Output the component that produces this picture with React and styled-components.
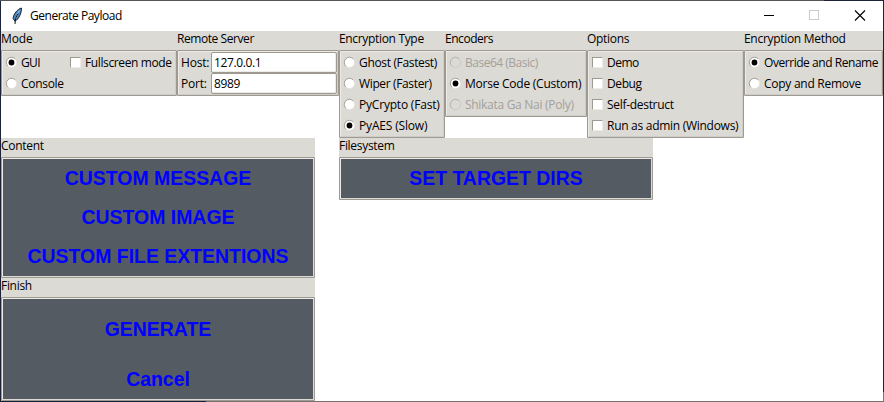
import React from "react";
import styled, { createGlobalStyle } from "styled-components";

const Global = createGlobalStyle`
  * { box-sizing: border-box; }
  body { margin: 0; overflow: hidden; background: #fff; }
`;
const Desktop = styled.div`
  width: 884px; height: 402px; padding: 1px;
  background:
    linear-gradient(90deg, #14203a 206px, #74716f 206px) 0 401px / 884px 1px no-repeat,
    linear-gradient(90deg, #555354 824px, #1a2338 824px) 0 0 / 884px 1px no-repeat,
    linear-gradient(#1a2338 392px, #777 392px) 883px 0 / 1px 402px no-repeat,
    #1a2338;
`;
const Window = styled.main`
  width: 882px; height: 400px; background: #fff; color: #000;
  font: 12px/19px "Open Sans", "Noto Sans", sans-serif;
`;
const TitleBar = styled.header`
  height: 30px; display: flex; align-items: center; padding-left: 10px;
`;
const Title = styled.span`
  margin-left: 7px; flex: 1; letter-spacing: -0.48px; line-height: 28px; height: 28px;
`;
const Controls = styled.div`
  display: flex; svg { display: block; }
`;
const Grid = styled.div`
  display: grid;
  grid-template-columns: 176px 162px 106px 142px 157px 139px;
  grid-template-rows: 107px 140px 123px;
  align-items: start;
`;
const Group = styled.section`
  grid-column: ${(p) => p.$col};
  width: ${(p) => (p.$w ? p.$w + "px" : "auto")};
  background: #dcdad5;
`;
const Legend = styled.div`
  height: 19px; line-height: 15px; white-space: nowrap;
  letter-spacing: ${(p) => p.$ls}px;
`;
const Frame = styled.div`
  border: 1px solid #9e9a91; border-radius: 1px;
`;
const Inner = styled.div`
  border: 1px solid; border-color: #eeebe7 #cfcdc8 #cfcdc8 #eeebe7;
`;
const Row = styled.div`
  height: 21px; display: flex; align-items: center;
`;
const Choice = styled.label`
  display: flex; align-items: center; height: 21px; line-height: 21px; padding-left: 3px;
  white-space: nowrap; color: ${(p) => (p.$off ? "#a3a19c" : "#000")};
  letter-spacing: ${(p) => p.$ls}px;
  margin-left: ${(p) => p.$ml || 0}px;
`;
const Mark = styled.svg`
  width: 13px; height: 13px; flex: none; margin: 0 3px 0 -1px; display: block;
`;
const Check = styled.span`
  width: 11px; height: 11px; flex: none; margin-right: 4px; background: #fff;
  border: 1px solid; border-color: #9e9a91 #eeebe7 #eeebe7 #9e9a91;
`;
const FieldLabel = styled.span`
  width: 32px; padding-left: 2px; line-height: 20px; letter-spacing: -0.2px;
`;
const Field = styled.input`
  width: 126px; height: 21px; border: 1px solid #9e9a91; border-radius: 2px; background: #fff;
  box-shadow: inset -1px -1px #eeebe7; padding: 0 2px; outline: none;
  font: 12px/19px "Open Sans", "Noto Sans", sans-serif; letter-spacing: -0.38px; color: #000;
`;
const Panel = styled(Inner)`
  background: #555b63; border-color: #eeebe7 #dcdad5 #dcdad5 #eeebe7;
`;
const Action = styled.button`
  display: block; width: 100%; height: ${(p) => p.$h || 39}px; border: 0;
  padding: ${(p) => p.$pt || 0}px 0 0; background: transparent; color: #00f;
  font: bold 19.45px/39px "Liberation Sans", Arial, sans-serif; text-align: center;
`;

const Radio = ({ on, off, ls = -0.3, children }) => (
  <Choice $off={off} $ls={ls}>
    <Mark viewBox="0 0 13 13">
      <circle cx="6.5" cy="6.5" r="5.1" fill={off ? "#dcdad5" : "#fff"} stroke={off ? "#c8c5be" : "#e4e1dc"} strokeWidth="0.8" />
      <path d="M2.8 10.2A5.2 5.2 0 0 1 10.2 2.8" fill="none" stroke={off ? "#b5b2aa" : "#9e9a91"} strokeWidth="0.9" />
      {on && <circle cx="6.5" cy="6.5" r="2.9" fill="#000" />}
    </Mark>
    {children}
  </Choice>
);
const Box = ({ ls = -0.3, ml, children }) => (
  <Choice $ls={ls} $ml={ml}><Check />{children}</Choice>
);

const LabelFrame = ({ title, col, w, ls = -0.3, dark, children }) => {
  const Body = dark ? Panel : Inner;
  return (
    <Group $col={col} $w={w}>
      <Legend $ls={ls}>{title}</Legend>
      <Frame><Body>{children}</Body></Frame>
    </Group>
  );
};

export default function App() {
  return (
    <Desktop>
      <Global />
      <Window>
        <TitleBar>
          <svg width="12" height="18" viewBox="0 0 12 18">
            <path d="M10.4 1C6.5 2.2 2.3 7 2.1 11.6L4 14.2C7.7 12.3 10.8 5.8 10.4 1Z" fill="#4c87c2" stroke="#15202e" strokeWidth="1" />
            <path d="M9 3.2C6.4 6 5 9 4.7 12.3" stroke="#a8cdf0" fill="none" />
            <path d="M7 6.5C5 9.5 4 12.5 4 17" stroke="#111" fill="none" />
          </svg>
          <Title>Generate Payload</Title>
          <Controls>
            <svg width="45" height="28"><path d="M13 13.5H23" stroke="#000" /></svg>
            <svg width="46" height="28"><rect x="13.5" y="8.5" width="9" height="9" fill="none" stroke="#ccc" /></svg>
            <svg width="41" height="28"><path d="M13 8.5l10 10M23 8.5l-10 10" stroke="#000" strokeWidth="1.1" /></svg>
          </Controls>
        </TitleBar>
        <Grid>
          <LabelFrame title="Mode" col="1" ls={-0.1}>
            <Row><Radio on ls={-0.6}>GUI</Radio><Box ml={27} ls={-0.39}>Fullscreen mode</Box></Row>
            <Row><Radio>Console</Radio></Row>
          </LabelFrame>
          <LabelFrame title="Remote Server" col="2" ls={-0.43}>
            <Row><FieldLabel>Host:</FieldLabel><Field defaultValue="127.0.0.1" /></Row>
            <Row><FieldLabel>Port:</FieldLabel><Field defaultValue="8989" /></Row>
          </LabelFrame>
          <LabelFrame title="Encryption Type" col="3" ls={-0.33}>
            <Radio ls={-0.34}>Ghost (Fastest)</Radio>
            <Radio ls={-0.36}>Wiper (Faster)</Radio>
            <Radio ls={-0.2}>PyCrypto (Fast)</Radio>
            <Radio on ls={-0.17}>PyAES (Slow)</Radio>
          </LabelFrame>
          <LabelFrame title="Encoders" col="4" ls={-0.46}>
            <Radio off ls={-0.5}>Base64 (Basic)</Radio>
            <Radio on ls={-0.24}>Morse Code (Custom)</Radio>
            <Radio off ls={-0.29}>Shikata Ga Nai (Poly)</Radio>
          </LabelFrame>
          <LabelFrame title="Options" col="5">
            <Box ls={-0.5}>Demo</Box>
            <Box ls={-0.4}>Debug</Box>
            <Box>Self-destruct</Box>
            <Box ls={-0.28}>Run as admin (Windows)</Box>
          </LabelFrame>
          <LabelFrame title="Encryption Method" col="6">
            <Radio on ls={-0.45}>Override and Rename</Radio>
            <Radio ls={-0.27}>Copy and Remove</Radio>
          </LabelFrame>
          <LabelFrame title="Content" col="1 / 3" w={314} dark>
            <Action>CUSTOM MESSAGE</Action>
            <Action>CUSTOM IMAGE</Action>
            <Action>CUSTOM FILE EXTENTIONS</Action>
          </LabelFrame>
          <LabelFrame title="Filesystem" col="3 / 6" w={314} dark>
            <Action>SET TARGET DIRS</Action>
          </LabelFrame>
          <LabelFrame title="Finish" col="1 / 3" w={314} dark>
            <Action $h={50} $pt={10}>GENERATE</Action>
            <Action $h={50} $pt={10}>Cancel</Action>
          </LabelFrame>
        </Grid>
      </Window>
    </Desktop>
  );
}
